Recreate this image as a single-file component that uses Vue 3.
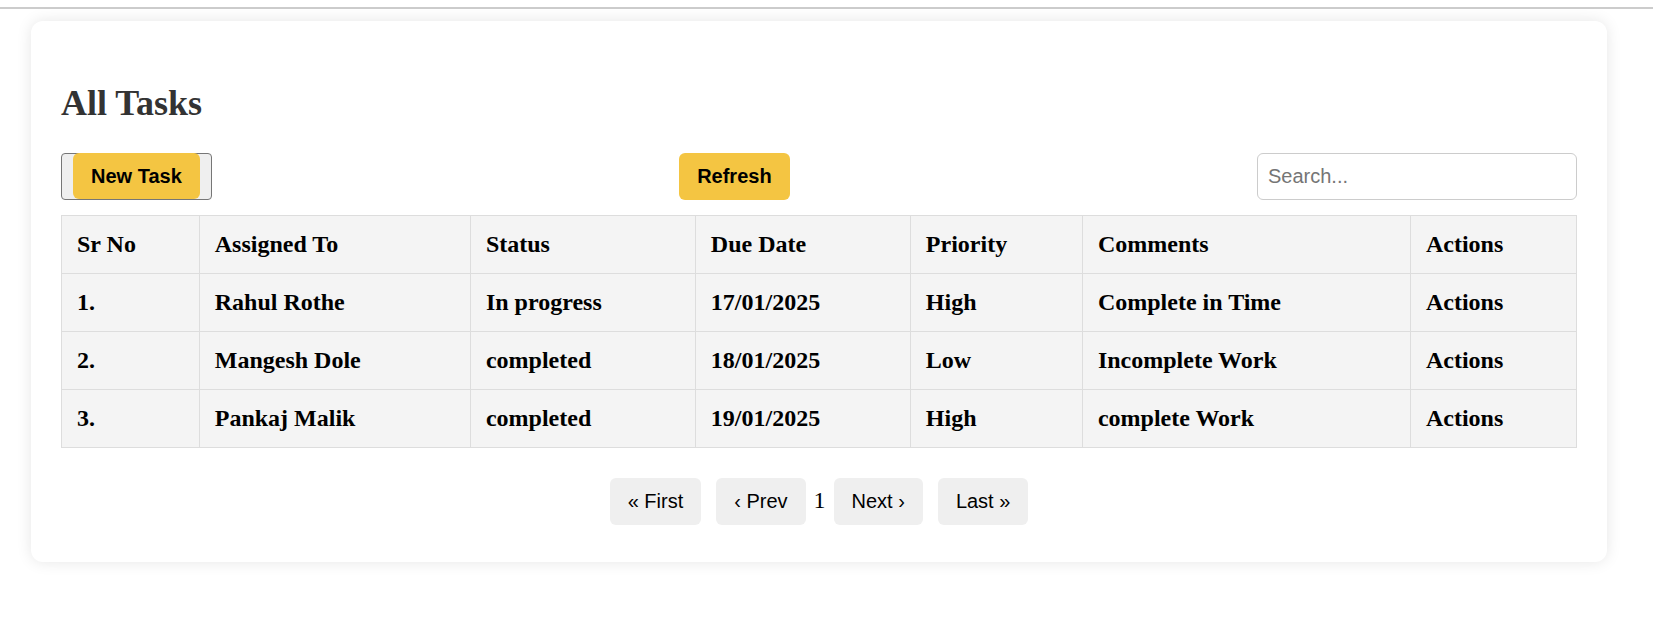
<script setup>
import { ref, computed } from 'vue'

const columns = ['Sr No', 'Assigned To', 'Status', 'Due Date', 'Priority', 'Comments', 'Actions']

const tasks = [
  ['1.', 'Rahul Rothe', 'In progress', '17/01/2025', 'High', 'Complete in Time', 'Actions'],
  ['2.', 'Mangesh Dole', 'completed', '18/01/2025', 'Low', 'Incomplete Work', 'Actions'],
  ['3.', 'Pankaj Malik', 'completed', '19/01/2025', 'High', 'complete Work', 'Actions'],
]

const query = ref('')
const visibleTasks = computed(() => {
  const q = query.value.trim().toLowerCase()
  return tasks.filter((task) => task.join(' ').toLowerCase().includes(q))
})
</script>

<template>
  <div class="page">
    <hr class="divider" />
    <main class="card">
      <h2 class="title">All Tasks</h2>
      <div class="toolbar">
        <button class="new-task" type="button"><span class="new-task-label">New Task</span></button>
        <button class="refresh" type="button">Refresh</button>
        <input v-model="query" class="search" type="text" placeholder="Search..." aria-label="Search tasks" />
      </div>
      <table class="tasks">
        <thead>
          <tr>
            <th v-for="column in columns" :key="column" scope="col">{{ column }}</th>
          </tr>
        </thead>
        <tbody>
          <tr v-for="task in visibleTasks" :key="task[0]">
            <td v-for="(value, i) in task" :key="i">{{ value }}</td>
          </tr>
        </tbody>
      </table>
      <nav class="pagination" aria-label="Pagination">
        <div class="pages">
          <button type="button">« First</button>
          <button type="button">‹ Prev</button>
        </div>
        <span>1</span>
        <div class="pages">
          <button type="button">Next ›</button>
          <button type="button">Last »</button>
        </div>
      </nav>
    </main>
  </div>
</template>

<style>
body {
  background: #fff;
}
</style>

<style scoped>
.page {
  box-sizing: border-box;
  min-height: 100vh;
  padding: 7px 0 30px;
  font-family: "Liberation Serif", "Times New Roman", serif;
  font-size: 24px;
  line-height: 27px;
  color: #000;
}

.divider {
  height: 2px;
  margin: 0;
  border: 0;
  background: #ccc;
}

.card {
  margin: 12px 46px 0 31px;
  padding: 30px 30px 37px;
  border-radius: 12px;
  background: #fff;
  box-shadow: 0 0 15px rgba(0, 0, 0, 0.1);
}

.title {
  margin: 31px 0 29px;
  font-size: 36px;
  line-height: 42px;
  color: #333;
}

.toolbar {
  display: flex;
  justify-content: space-between;
  margin-bottom: 15px;
}

button,
.search {
  box-sizing: border-box;
  height: 47px;
  font-family: "Liberation Sans", Arial, sans-serif;
  font-size: 20px;
  line-height: 23px;
  color: #000;
}

button {
  padding: 0 18px;
  border: 0;
  border-radius: 6px;
  background: #efefef;
  cursor: pointer;
}

.new-task {
  display: flex;
  align-items: flex-start;
  padding: 0 11px;
  border: 1px solid #767676;
  border-radius: 4px;
}

.new-task-label {
  margin-top: -1px;
  padding: 12px 18px 11px;
  border-radius: 6px;
}

.new-task-label,
.refresh {
  background: #f4c542;
  font-weight: bold;
}

.search {
  width: 320px;
  padding: 0 10px;
  border: 1px solid #ccc;
  border-radius: 6px;
  background: #fff;
}

.search::placeholder {
  color: #757575;
}

.tasks {
  width: 100%;
  border-collapse: collapse;
}

.tasks th,
.tasks td {
  padding: 15px;
  border: 1px solid #ddd;
  background: #f4f4f4;
  font-weight: bold;
  text-align: left;
}

.pagination {
  display: flex;
  align-items: baseline;
  justify-content: center;
  gap: 8px;
  margin-top: 30px;
}

.pages {
  display: flex;
  gap: 15px;
}
</style>
